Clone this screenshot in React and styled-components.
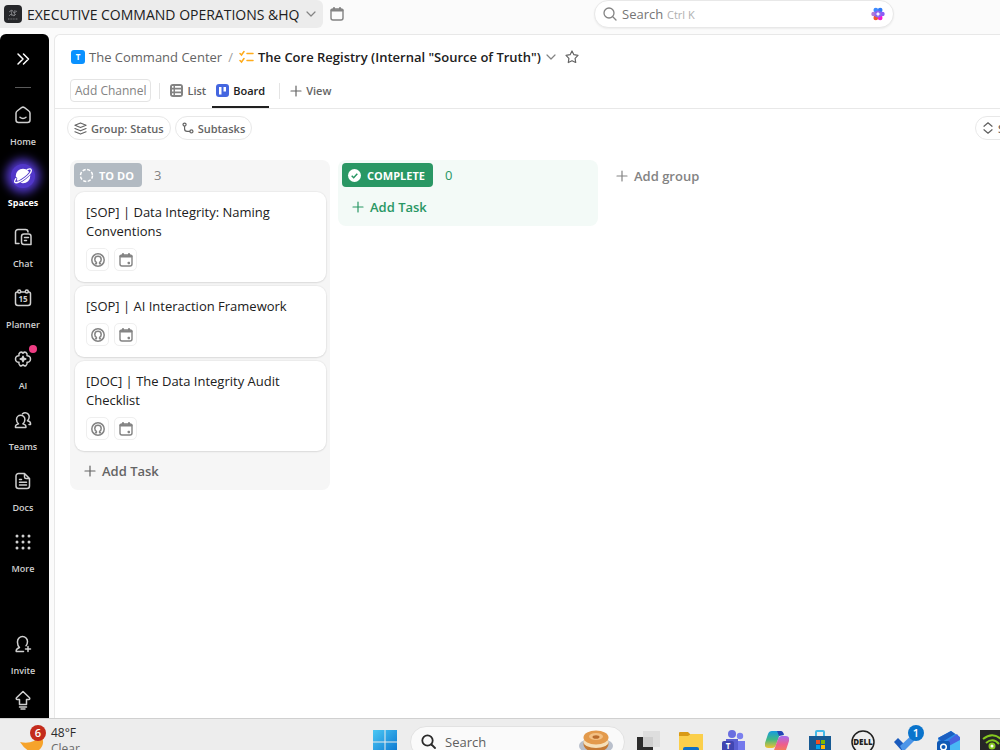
import React from 'react'
import styled, { createGlobalStyle } from 'styled-components';

const GlobalStyle = createGlobalStyle`
    * { box-sizing: border-box; }

    body {
        margin: 0;
        background: #fbfbfb;
        font-family: 'Open Sans', sans-serif;
        font-size: 13px;
        color: #2a2a2a;
    }

    button, input {
        font: inherit;
        color: inherit;
        background: none;
        border: 0;
        padding: 0;
        margin: 0;
    }

    a { color: inherit; text-decoration: none; }
    svg { display: block; flex: none; }
`

const Desktop = styled.div`
    display: grid;
    grid-template-rows: 34px minmax(0, 1fr) 32px;
    height: 100vh;
    overflow: hidden;
`

/* top bar */

const TopBar = styled.header`
    display: flex;
    align-items: flex-start;
    padding-right: 106px;
`

const Workspace = styled.button`
    display: flex;
    align-items: center;
    gap: 5px;
    height: 28px;
    padding: 0 6px 0 4px;
    border-radius: 0 6px 6px 0;
    background: #ececec;
    font-size: 14px;
    font-weight: 500;
    white-space: nowrap;
    color: #202020;

    svg:last-child { color: #838383; }
`

const IconButton = styled.button`
    display: flex;
    align-items: center;
    justify-content: center;
    width: 28px;
    height: 28px;
    color: #838383;
`

const SearchBox = styled.label`
    display: flex;
    align-items: center;
    width: 300px;
    height: 28px;
    margin-left: auto;
    padding: 0 8px;
    border: 1px solid #e8e8e8;
    border-radius: 14px;
    background: #fff;
    box-shadow: 0 1px 2px rgba(0, 0, 0, .06);
    color: #838383;

    input {
        width: 45px;
        margin-left: 5px;
        font-weight: 500;
        outline: 0;
    }
    input::placeholder { color: #757575; opacity: 1; }
    kbd { flex: 1; font-family: inherit; font-size: 11px; color: #b0b0b0; }
`

/* sidebar */

const Body = styled.div`
    display: grid;
    grid-template-columns: 49px minmax(0, 1fr);
    column-gap: 5px;
    min-height: 0;
`

const SideNav = styled.nav`
    display: flex;
    flex-direction: column;
    align-items: center;
    padding-right: 3px;
    border-radius: 6px 6px 0 0;
    background: #000;
    color: #d0d0d0;
`

const Expand = styled.button`
    display: flex;
    align-items: center;
    justify-content: center;
    width: 100%;
    height: 50px;
    color: #fff;
`

const Rule = styled.hr`
    width: 16px;
    height: 1px;
    margin: 3px 0 10px;
    border: 0;
    background: #5a5a5a;
`

const NavItem = styled.a`
    display: flex;
    flex-direction: column;
    align-items: center;
    gap: 8px;
    width: 100%;
    height: 61px;
    padding-top: 5px;
    font-size: 9px;
    line-height: 14px;
    font-weight: ${({ $active }) => $active ? 700 : 600};
    color: ${({ $active }) => $active ? '#fff' : '#d0d0d0'};
`

const NavIcon = styled.span`
    display: flex;
    align-items: center;
    justify-content: center;
    position: relative;
    width: 24px;
    height: 24px;
    border-radius: 50%;
    background: ${({ $active }) => $active ? '#5137c8' : 'none'};
    box-shadow: ${({ $active }) => $active ? '0 0 10px 5px #5137c8' : 'none'};
`

const Dot = styled.i`
    position: absolute;
    top: -2px;
    right: -2px;
    width: 8px;
    height: 8px;
    border-radius: 50%;
    background: #ee3d83;
`

const NavFoot = styled.div`
    width: 100%;
    margin-top: auto;
`

const Upgrade = styled.button`
    display: flex;
    align-items: center;
    justify-content: center;
    width: 100%;
    height: 24px;
    margin-bottom: 6px;
`

/* main panel */

const Main = styled.main`
    display: flex;
    flex-direction: column;
    min-width: 0;
    overflow: hidden;
    border: 1px solid #e8e8e8;
    border-width: 1px 0 0 1px;
    border-radius: 6px 0 0 0;
    background: #fff;
`

const Crumbs = styled.div`
    display: flex;
    align-items: center;
    height: 44px;
    padding-left: 16px;
    white-space: nowrap;
    color: #646464;

    a { display: flex; align-items: center; gap: 4px; }
    > span { margin: 0 6px; color: #a0a0a0; }
`

const ListTitle = styled.button`
    display: flex;
    align-items: center;
    gap: 4px;
    font-weight: 600;
    color: #202020;

    svg:last-child { color: #838383; }
`

const Star = styled.button`
    margin-left: 8px;
    color: #646464;
`

const Tabs = styled.div`
    display: flex;
    align-items: flex-start;
    height: 30px;
    padding-left: 15px;
    border-bottom: 1px solid #e8e8e8;
    font-size: 11px;
`

const Channel = styled.button`
    height: 23px;
    padding: 0 4px;
    border: 1px solid #e4e4e4;
    border-radius: 4px;
    font-size: 12px;
    color: #838383;
    white-space: nowrap;
`

const Divider = styled.span`
    width: 1px;
    height: 16px;
    margin: 4px 6px 0 8px;
    background: #e4e4e4;
`

const Tab = styled.button`
    display: flex;
    align-items: center;
    gap: 4px;
    height: 29px;
    margin-right: 2px;
    padding: 0 4px 4px;
    border-bottom: 2px solid ${({ $active }) => $active ? '#202020' : 'transparent'};
    font-weight: 600;
    color: ${({ $active }) => $active ? '#202020' : '#646464'};
`

const Filters = styled.div`
    display: flex;
    gap: 4px;
    padding: 7px 0 0 12px;
`

const Pill = styled.button`
    display: flex;
    align-items: center;
    flex: none;
    gap: 4px;
    height: 24px;
    padding: 0 6px;
    border: 1px solid #e8e8e8;
    border-radius: 12px;
    font-size: 11px;
    font-weight: 600;
    white-space: nowrap;
    color: #646464;
`

const FilterEnd = styled.div`
    display: flex;
    width: 25px;
    margin-left: auto;
`

/* board */

const Board = styled.div`
    display: flex;
    align-items: flex-start;
    gap: 8px;
    padding: 20px 0 0 15px;
`

const Column = styled.section`
    flex: none;
    width: 260px;
    padding: 3px 4px 0;
    border-radius: 8px;
    background: ${({ $tint }) => $tint};
`

const ColumnHead = styled.div`
    display: flex;
    align-items: center;
    gap: 12px;
    height: 24px;
    font-size: 13px;
    font-weight: 500;
    color: ${({ $color }) => $color};
`

const Status = styled.span`
    display: flex;
    align-items: center;
    gap: 5px;
    height: 24px;
    padding: 0 8px 0 5px;
    border-radius: 4px;
    background: ${({ $color }) => $color};
    font-size: 11px;
    font-weight: 700;
    color: #fff;
`

const Cards = styled.div`
    display: grid;
    gap: 4px;
    padding: 5px 0 0 1px;
`

const Card = styled.article`
    padding: 11px;
    border-radius: 9px;
    background: #fff;
    box-shadow: 0 0 1px 1px rgba(0, 0, 0, .04), 0 1px 2px rgba(0, 0, 0, .08);

    h3 {
        margin: 0;
        font-size: 13px;
        line-height: 19px;
        font-weight: 500;
        color: #202020;
    }
`

const Chips = styled.div`
    display: flex;
    gap: 5px;
    margin-top: 7px;
`

const Chip = styled.button`
    display: flex;
    align-items: center;
    justify-content: center;
    width: 23px;
    height: 23px;
    border: 1px solid #efefef;
    border-radius: 5px;
    color: #838383;
`

const AddButton = styled.button`
    display: flex;
    align-items: center;
    gap: 6px;
    height: ${({ $height }) => $height};
    padding-left: 10px;
    font-size: 13px;
    font-weight: 600;
    color: ${({ $color }) => $color};
`

/* windows taskbar */

const Taskbar = styled.footer`
    display: flex;
    height: 46px;
    border-top: 1px solid #d0d0d0;
    background: #ededed;
`

const Weather = styled.div`
    display: flex;
    flex: 0 0 37%;
    gap: 5px;
    padding: 6px 0 0 20px;
    font-size: 12px;
    line-height: 16px;
    color: #2a2a2a;

    div + div { color: #6b6b6b; }
`

const Apps = styled.div`
    display: flex;
    align-items: center;
    gap: 13px;
`

const AppButton = styled.button`
    display: flex;
    align-items: center;
    justify-content: center;
    width: 30px;
    height: 46px;
`

const TaskSearch = styled.label`
    display: flex;
    align-items: center;
    width: 215px;
    height: 32px;
    margin-right: -4px;
    margin-left: -3px;
    padding: 0 10px;
    border: 1px solid #e2e2e2;
    border-radius: 16px;
    background: #fafafa;

    input {
        flex: 1;
        min-width: 0;
        margin-left: 9px;
        font-size: 13px;
        outline: 0;
    }
    input::placeholder { color: #5f5f5f; opacity: 1; }
`

const Glyph = ({ size = 20, box = 20, width = 1.5, children }) => (
    <svg width={size} height={size} viewBox={`0 0 ${box} ${box}`} fill="none" stroke="currentColor"
        strokeWidth={width} strokeLinecap="round" strokeLinejoin="round" aria-hidden="true">
        {children}
    </svg>
)

const Chevron = () => <Glyph size={12} box={12} width={1.2}><path d="M2 4l4 4 4-4" /></Glyph>
const Plus = ({ size = 12 }) => <Glyph size={size} box={12} width={1.2}><path d="M6 1v10M1 6h10" /></Glyph>

const Calendar = ({ dot }) => (
    <Glyph size={16} box={16} width={1.4}>
        <rect x="2" y="3" width="12" height="11" rx="2" />
        <path d="M2.500 4.300h11" strokeWidth="2.200" />
        <path d="M5 2v1M11 2v1" strokeWidth="2" />
        {dot && <path d="M10.300 10.500h1v1h-1z" />}
    </Glyph>
)

const Person = () => (
    <Glyph size={16} box={16} width={1.5}>
        <circle cx="8" cy="8" r="6.200" />
        <path d="M5.500 11.700h.9v-1.400A3.200 3.200 0 014.800 7.500a3.200 3.200 0 016.400 0 3.200 3.200 0 01-1.600 2.800v1.400h.9" />
    </Glyph>
)

const navItems = [
    { label: 'Home', icon: <path d="M3 8.200c0-.9.400-1.700 1.100-2.200l4.400-3.300a2.500 2.500 0 013 0L15.900 6c.7.500 1.100 1.300 1.100 2.200V15a2.500 2.500 0 01-2.500 2.500h-9A2.500 2.500 0 013 15V8.200zM7 12.300c1.700 1.700 4.300 1.700 6 0" /> },
    {
        label: 'Spaces', active: true, icon: <>
            <circle cx="10" cy="10" r="6.500" fill="#fff" />
            <path d="M2.800 12.600C1.900 14.400 1.300 15.800 1.900 16.400c1.100 1.100 5.800-.9 10-4.200S19 5.200 18.100 3.500" stroke="#5137c8" strokeWidth="2.800" />
            <path d="M14.200 3.600c2-.9 3.500-.9 3.900-.1.900 1.700-1.900 5.400-6.200 8.700S3 17.500 1.900 16.400c-.6-.6-.2-2 .9-3.800" strokeWidth="1.300" />
        </>
    },
    { label: 'Chat', icon: <path d="M6 16.500H2.500V5A2.500 2.500 0 015 2.500h7.500A2.500 2.500 0 0115 5M11 7h4.500A2.500 2.500 0 0118 9.500v8h-7a2.500 2.500 0 01-2.500-2.500V9.500A2.500 2.500 0 0111 7zM11.500 10.500h4M11.500 13.500h2" /> },
    {
        label: 'Planner', icon: <>
            <path d="M4.500 4H4.300A1.800 1.800 0 002.500 5.800V15A2.500 2.500 0 005 17.500h10a2.500 2.500 0 002.500-2.500V5.800A1.800 1.800 0 0015.700 4h-.2M8 4h4" />
            <circle cx="6.200" cy="3.500" r="1.500" /><circle cx="13.800" cy="3.500" r="1.500" />
            <text x="10" y="14" textAnchor="middle" fontSize="8" fontWeight="700" fill="currentColor" stroke="none">15</text>
        </>
    },
    {
        label: 'AI', dot: true, icon: <>
            <path d="M7 3.500c1.300-.8 2.300-.2 3 .7.700-.9 1.700-1.500 3-.7 1.300.8 1.300 2 1 3.200 2-.1 3.500 1 3.500 3.300s-1.500 3.400-3.500 3.300c.3 1.200.3 2.400-1 3.200-1.300.8-2.300.2-3-.7-.7.900-1.700 1.500-3 .7-1.300-.8-1.300-2-1-3.200-2 .1-3.500-1-3.500-3.300s1.500-3.400 3.500-3.300c-.3-1.200-.3-2.400 1-3.200z" />
            <path d="M10 7.200l.8 2 2 .8-2 .8-.8 2-.8-2-2-.8 2-.8z" fill="currentColor" />
        </>
    },
    { label: 'Teams', icon: <path d="M2.500 17.500v-1.200c0-1.300 1.300-1.900 3-2.400-1.300-1.100-2-2.700-2-4.400a4.200 4.200 0 018.400 0c0 1.700-.7 3.300-2 4.400 1.700.5 3 1.100 3 2.400v1.200zM9.500 3.800a4 4 0 016.700 3c0 1.700-.6 3-1.700 4 1.600.5 3 1.100 3 2.500v1.200h-1.500" /> },
    { label: 'Docs', icon: <path d="M5.500 2.500h6l5 5V15a2.500 2.500 0 01-2.500 2.500H5.500A2.500 2.500 0 013 15V5a2.500 2.500 0 012.500-2.500zM11.500 2.500V6A1.500 1.500 0 0013 7.500h3.500M6.500 8.500h2M6.500 11.300h7M6.500 14h7" /> },
    {
        label: 'More', icon: [ 4, 10, 16 ].map(y => [ 4, 10, 16 ].map(x => (
            <circle key={`${x}-${y}`} cx={x} cy={y} r="1.500" fill="currentColor" stroke="none" />
        )))
    },
]

const tasks = [
    '[SOP] | Data Integrity: Naming Conventions',
    '[SOP] | AI Interaction Framework',
    '[DOC] | The Data Integrity Audit Checklist',
]

const Brain = () => (
    <svg width="14" height="14" viewBox="0 0 16 16" aria-hidden="true">
        <circle cx="5.500" cy="3.500" r="2.700" fill="#3e8bff" />
        <circle cx="10.500" cy="3.500" r="2.700" fill="#2f7bf6" />
        <circle cx="13" cy="8" r="2.700" fill="#8b5cf6" />
        <circle cx="10.500" cy="12.500" r="2.700" fill="#f31bd0" />
        <circle cx="5.500" cy="12.500" r="2.700" fill="#f0562c" />
        <circle cx="3" cy="8" r="2.700" fill="#b07bd8" />
        <circle cx="8" cy="8" r="4" fill="#8a62f0" />
        <path d="M8 5l.9 2.100L11 8l-2.100.9L8 11l-.9-2.100L5 8l2.100-.9z" fill="#fff" />
    </svg>
)

const apps = [
    {
        name: 'Task View', icon: <>
            <path d="M1 8h16v18H1z" fill="#2c2c2c" /><path d="M7 2h17v16H7z" fill="#dcdcdc" opacity=".92" />
        </>
    },
    {
        name: 'File Explorer', icon: <>
            <path d="M0 4a1 1 0 011-1h8l3 3v4H0z" fill="#d99a16" /><path d="M0 7h9l3-2h12v20H0z" fill="#fbcf4b" /><path d="M4 20q0-2 2-2h12q2 0 2 2v5H4z" fill="#0f6fc5" />
        </>
    },
    {
        name: 'Teams', icon: <>
            <circle cx="10" cy="5" r="4" fill="#6a6ee0" /><circle cx="18" cy="7" r="3.200" fill="#7b80ee" /><path d="M13 12h10v12H13z" fill="#7479ec" /><path d="M4 10h12v14H4z" fill="#5a5fd2" /><rect y="12" width="12" height="12" rx="2" fill="#4145b0" /><text x="6" y="20" textAnchor="middle" fontSize="8" fontWeight="700" fill="#fff">T</text>
        </>
    },
    {
        name: 'Copilot', icon: <>
            <defs>
                <linearGradient id="cpa" x1="0" y1="0" x2="0" y2="1"><stop stopColor="#169be0" /><stop offset=".5" stopColor="#42b883" /><stop offset="1" stopColor="#f2c230" /></linearGradient>
                <linearGradient id="cpb" x1="0" y1="0" x2="0" y2="1"><stop stopColor="#a56cf0" /><stop offset=".5" stopColor="#ef5f8c" /><stop offset="1" stopColor="#f58b45" /></linearGradient>
            </defs>
            <path d="M7 2h9L11 16q-1 3-4 3H3q-4 0-3-5L3 5q1-3 4-3z" fill="url(#cpa)" />
            <path d="M12 2h4q2 0 3 4l-5 1z" fill="#2146b5" />
            <path d="M17 7h4q4 0 3 5l-3 9q-1 3-4 3H8l5-14q1-3 4-3z" fill="url(#cpb)" />
        </>
    },
    {
        name: 'Store', icon: <>
            <path d="M8 8V3q0-1 1-1h6q1 0 1 1v5" fill="none" stroke="#43b9e8" strokeWidth="2" /><path d="M1 7h22v17H1z" fill="#175a93" /><path d="M8 11h4v4H8z" fill="#f25022" /><path d="M13 11h4v4h-4z" fill="#7fba00" /><path d="M8 16h4v4H8z" fill="#00a4ef" /><path d="M13 16h4v4h-4z" fill="#ffb900" />
        </>
    },
    {
        name: 'Dell', icon: <>
            <circle cx="12" cy="13" r="11" fill="none" stroke="#1f1f1f" strokeWidth="1.500" /><text x="12" y="16" textAnchor="middle" fontSize="8" fontWeight="800" fill="#1f1f1f">DELL</text>
        </>
    },
    {
        name: 'To Do', badge: '1', icon: <>
            <path d="M0 13l4-4 8 8-4 5z" fill="#195abd" /><path d="M6 17L20 4l4 4L9 23z" fill="#4c95e8" />
        </>
    },
    {
        name: 'Outlook', icon: <>
            <path d="M1 9L14 2l9 6v16H4z" fill="#2b8ce8" /><path d="M1 9L14 2l4 3L5 13z" fill="#1b5fc1" /><path d="M8 14L20 5l3 4v4L10 20z" fill="#4763e0" /><path d="M10 18l13-7v13H10z" fill="#49b8f5" /><rect x="0" y="12" width="13" height="12" rx="2" fill="#0f59b5" /><circle cx="6.500" cy="18" r="2.800" fill="none" stroke="#fff" strokeWidth="1.500" />
        </>
    },
    {
        name: 'NVIDIA', icon: <>
            <path d="M0 1h24v24H0z" fill="#262626" /><path d="M3 10q10-8 19 1M6 14q7-6 13 1" fill="none" stroke="#86c91f" strokeWidth="2" /><circle cx="12" cy="17" r="2.500" fill="#fff" stroke="#86c91f" strokeWidth="2" />
        </>
    },
]

const TaskCard = ({ title }) => (
    <Card>
        <h3>{title}</h3>
        <Chips>
            <Chip aria-label="Assignee"><Person /></Chip>
            <Chip aria-label="Due date"><Calendar dot /></Chip>
        </Chips>
    </Card>
)

const Badge = styled.b`
    position: absolute;
    top: ${({ $top }) => $top};
    right: ${({ $right }) => $right};
    width: 16px;
    height: 16px;
    border-radius: 50%;
    background: ${({ $color }) => $color};
    font-size: 11px;
    line-height: 16px;
    font-weight: 600;
    text-align: center;
    color: #fff;
`

const Badged = styled.span`
    display: block;
    position: relative;
    width: 26px;
`

export default function App() {
    return (
        <Desktop>
            <GlobalStyle />
            <TopBar>
                <Workspace>
                    <svg width="18" height="18" viewBox="0 0 18 18" aria-hidden="true">
                        <rect width="18" height="18" rx="4" fill="#26272a" />
                        <path d="M5 7l3-2 2 3 3-2M5 11l2-2 3 2 2-2M7 5l1 6M11 5l-1 6" stroke="#8b8d90" strokeWidth=".8" fill="none" />
                        <path d="M4 14h10" stroke="#77797c" strokeDasharray="1 .6" />
                    </svg>
                    EXECUTIVE COMMAND OPERATIONS &amp;HQ
                    <Chevron />
                </Workspace>
                <IconButton aria-label="Calendar"><Calendar /></IconButton>
                <SearchBox>
                    <Glyph size={14} box={14} width={1.3}><circle cx="6" cy="6" r="5" /><path d="M10 10l3 3" /></Glyph>
                    <input type="text" placeholder="Search" aria-label="Search" />
                    <kbd>Ctrl K</kbd>
                    <Brain />
                </SearchBox>
            </TopBar>
            <Body>
                <SideNav>
                    <Expand aria-label="Expand sidebar">
                        <Glyph size={14} box={14}><path d="M2 2l5 5-5 5M7.500 2l5 5-5 5" /></Glyph>
                    </Expand>
                    <Rule />
                    {navItems.map(({ label, icon, active, dot }) => (
                        <NavItem key={label} href="#" $active={active}>
                            <NavIcon $active={active}>
                                <Glyph>{icon}</Glyph>
                                {dot && <Dot />}
                            </NavIcon>
                            {label}
                        </NavItem>
                    ))}
                    <NavFoot>
                        <NavItem href="#">
                            <NavIcon>
                                <Glyph><path d="M10.500 17.500H3.200v-1c0-1.600 1.500-2.300 3.300-3C5 12.300 4.500 10.500 4.500 8.500v-1a5 5 0 0110 0c0 1.500-.4 3-1.500 4.300M15 12.500v5M12.500 15h5" /></Glyph>
                            </NavIcon>
                            Invite
                        </NavItem>
                        <Upgrade aria-label="Upgrade">
                            <Glyph><path d="M10 1.500l6.500 6.300c.6.700.2 1.700-.7 1.700H13.500v5h-7v-5H4.200c-.9 0-1.300-1-.7-1.700zM6.500 17h7M8 19h4" /></Glyph>
                        </Upgrade>
                    </NavFoot>
                </SideNav>
                <Main>
                    <Crumbs>
                        <a href="#">
                            <svg width="14" height="14" viewBox="0 0 14 14" aria-hidden="true">
                                <rect width="14" height="14" rx="3" fill="#0a91ff" />
                                <text x="7" y="10" textAnchor="middle" fontSize="8" fontWeight="700" fill="#fff">T</text>
                            </svg>
                            The Command Center
                        </a>
                        <span>/</span>
                        <ListTitle>
                            <svg width="15" height="14" viewBox="0 0 15 14" fill="none" stroke="#ffab1a" strokeWidth="1.500" strokeLinecap="round" aria-hidden="true">
                                <path d="M1 3.500l1.500 1.500L5 1.500M1 10.500L2.500 12 5 8.500M8 3.500h6M8 10.500h6" />
                            </svg>
                            The Core Registry (Internal "Source of Truth")
                            <Chevron />
                        </ListTitle>
                        <Star aria-label="Favorite">
                            <Glyph size={14} box={14} width={1.2}><path d="M7 1l1.900 3.700 4.100.7-2.900 3 .6 4.100L7 10.700l-3.700 1.800.6-4.100-2.900-3 4.100-.7z" /></Glyph>
                        </Star>
                    </Crumbs>
                    <Tabs>
                        <Channel>Add Channel</Channel>
                        <Divider />
                        <Tab>
                            <svg width="13" height="13" viewBox="0 0 13 13" aria-hidden="true">
                                <rect width="13" height="13" rx="3" fill="#838383" />
                                <path d="M2 2h1.500v1.700H2zM5 2h6v1.700H5zM2 5.500h1.500v2H2zM5 5.500h6v2H5zM2 9.300h1.500V11H2zM5 9.300h6V11H5z" fill="#fff" />
                            </svg>
                            List
                        </Tab>
                        <Tab $active>
                            <svg width="13" height="13" viewBox="0 0 13 13" aria-hidden="true">
                                <rect width="13" height="13" rx="3" fill="#4466e0" />
                                <path d="M3 3h2.500v7.500H3zM7.500 3H10v4.500H7.500z" fill="#fff" />
                            </svg>
                            Board
                        </Tab>
                        <Divider />
                        <Tab><Plus />View</Tab>
                    </Tabs>
                    <Filters>
                        <Pill>
                            <Glyph size={13} box={14} width={1.2}><path d="M7 1l6 2.500L7 6 1 3.500zM1 7l6 2.500L13 7M1 10.500L7 13l6-2.500" /></Glyph>
                            Group: Status
                        </Pill>
                        <Pill>
                            <Glyph size={12} box={14} width={1.4}><circle cx="3" cy="3" r="1.800" /><circle cx="11" cy="11" r="1.800" /><path d="M3 5v3a3 3 0 003 3h3" /></Glyph>
                            Subtasks
                        </Pill>
                        <FilterEnd>
                            <Pill>
                                <Glyph size={12} box={12} width={1.3}><path d="M2 4.200L6 .8l4 3.400M2 7.800l4 3.400 4-3.400" /></Glyph>
                                Sort
                            </Pill>
                        </FilterEnd>
                    </Filters>
                    <Board>
                        <Column $tint="#f6f6f6">
                            <ColumnHead $color="#838383">
                                <Status $color="#b2bac2">
                                    <svg width="15" height="15" viewBox="0 0 15 15" fill="none" stroke="#fff" strokeWidth="1.500" aria-hidden="true">
                                        <circle cx="7.500" cy="7.500" r="6" strokeDasharray="3.200 1.500" />
                                    </svg>
                                    TO DO
                                </Status>
                                3
                            </ColumnHead>
                            <Cards>
                                {tasks.map(title => <TaskCard key={title} title={title} />)}
                            </Cards>
                            <AddButton $height="39px" $color="#646464"><Plus />Add Task</AddButton>
                        </Column>
                        <Column $tint="#f3faf7">
                            <ColumnHead $color="#299764">
                                <Status $color="#299764">
                                    <svg width="15" height="15" viewBox="0 0 15 15" aria-hidden="true">
                                        <circle cx="7.500" cy="7.500" r="6.500" fill="#fff" />
                                        <path d="M4.700 7.700l2 2 3.600-3.900" fill="none" stroke="#299764" strokeWidth="1.500" />
                                    </svg>
                                    COMPLETE
                                </Status>
                                0
                            </ColumnHead>
                            <AddButton $height="39px" $color="#299764"><Plus />Add Task</AddButton>
                        </Column>
                        <AddButton $height="31px" $color="#838383"><Plus />Add group</AddButton>
                    </Board>
                </Main>
            </Body>
            <Taskbar>
                <Weather>
                    <Badged>
                        <svg width="24" height="32" viewBox="0 0 24 32" aria-hidden="true">
                            <path d="M21 10q5 9-2 15-10 6-19-8 13 3 21-7z" fill="#f6a32b" />
                        </svg>
                        <Badge $top="0" $right="0" $color="#c42b1c">6</Badge>
                    </Badged>
                    <div>
                        <div>48°F</div>
                        <div>Clear</div>
                    </div>
                </Weather>
                <Apps>
                    <AppButton aria-label="Start">
                        <svg width="24" height="24" viewBox="0 0 24 24" aria-hidden="true">
                            <defs><linearGradient id="win" x1="0" y1="0" x2="1" y2="1"><stop stopColor="#4cc8f4" /><stop offset="1" stopColor="#0873cf" /></linearGradient></defs>
                            <path d="M0 0h11.500v11.500H0zM12.500 0H24v11.500H12.500zM0 12.500h11.500V24H0zM12.500 12.500H24V24H12.500z" fill="url(#win)" />
                        </svg>
                    </AppButton>
                    <TaskSearch>
                        <Glyph size={15} box={15} width={1.8}><circle cx="6.500" cy="6.500" r="5.200" /><path d="M10.500 10.500L14 14" /></Glyph>
                        <input type="text" placeholder="Search" aria-label="Search Windows" />
                        <svg width="36" height="28" viewBox="0 0 36 28" aria-hidden="true">
                            <ellipse cx="18" cy="18" rx="17" ry="8" fill="#b9c0cc" />
                            <ellipse cx="18" cy="16" rx="12.500" ry="8" fill="#c47a35" />
                            <ellipse cx="18" cy="14" rx="12.500" ry="6" fill="#f6dfb8" />
                            <ellipse cx="18" cy="9.500" rx="12.500" ry="7" fill="#e39a4c" />
                            <ellipse cx="18" cy="8.500" rx="7" ry="3.500" fill="#f3c083" />
                            <ellipse cx="18" cy="9" rx="3.500" ry="1.800" fill="#b96c2d" />
                        </svg>
                    </TaskSearch>
                    {apps.map(({ name, icon, badge }) => (
                        <AppButton key={name} aria-label={name}>
                            <Badged>
                                <svg width="24" height="26" viewBox="0 0 24 26" aria-hidden="true">{icon}</svg>
                                {badge && <Badge $top="-4px" $right="-4px" $color="#0a74cc">{badge}</Badge>}
                            </Badged>
                        </AppButton>
                    ))}
                </Apps>
            </Taskbar>
        </Desktop>
    )
}
